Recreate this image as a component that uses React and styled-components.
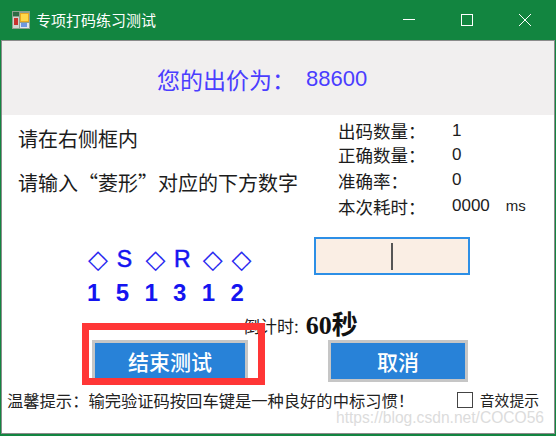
import styled, { createGlobalStyle } from 'styled-components'

const cjk = '"Noto Sans CJK SC", "Liberation Sans", sans-serif'

const GlobalStyle = createGlobalStyle`
    html, body {
        margin: 0;
        padding: 0;
        background: #fff;
        font-family: ${cjk};
    }
`

const Window = styled.div`
    position: relative;
    width: 556px;
    height: 436px;
    box-sizing: border-box;
    display: flex;
    flex-direction: column;
    overflow: hidden;
    background: #128540;
`

const TitleBar = styled.header`
    height: 40px;
    flex: none;
    display: flex;
    align-items: center;
    padding-left: 12px;
    color: #fff;
    font-size: 15px;
`

const TitleText = styled.span`
    margin-left: 6px;
    line-height: 18px;
`

const Controls = styled.div`
    margin-left: auto;
    margin-right: 2px;
    display: flex;
`

const ControlButton = styled.div`
    width: 58px;
    height: 40px;
    display: flex;
    align-items: center;
    justify-content: center;
`

const Client = styled.main`
    flex: 1;
    margin: 0 1px 2px 1px;
    border: 1px solid #8b8b8b;
    background: #fff;
    display: flex;
    flex-direction: column;
`

const Banner = styled.section`
    height: 74px;
    flex: none;
    background: #f1efef;
    color: #4a3dff;
    font-size: 23px;
    padding-left: 155px;
    display: flex;
    align-items: center;
    box-sizing: border-box;
    padding-top: 1px;
`

const Price = styled.span`
    margin-left: 11px;
    font-size: 22px;
    font-family: "Liberation Sans", sans-serif;
`

const InfoRow = styled.section`
    height: 110px;
    flex: none;
    display: flex;
    padding-left: 16px;
`

const Prompt = styled.div`
    width: 320px;
    flex: none;
    padding-top: 9px;
    font-size: 20px;
    color: #1c1c1c;
`

const PromptLine = styled.div`
    height: 44px;
    line-height: 30px;
    white-space: nowrap;
`

const Stats = styled.div`
    padding-top: 3px;
    font-size: 17.5px;
    color: #1c1c1c;
`

const StatRow = styled.div`
    display: grid;
    grid-template-columns: 114px auto;
    align-items: center;
    height: ${p => p.$h}px;
    white-space: nowrap;
`

const StatValue = styled.span`
    font-family: "Liberation Sans", sans-serif;
    font-size: 17px;
`

const Unit = styled.span`
    margin-left: 16px;
    font-size: 15px;
`

const PlayRow = styled.section`
    height: 87px;
    flex: none;
    display: flex;
    padding-left: 88px;
`

const Codes = styled.div`
    width: 224px;
    flex: none;
    padding-top: 18px;
    display: grid;
    grid-template-columns: repeat(6, 28.7px);
    grid-auto-rows: 33px;
    color: #1414f0;
    align-items: center;
`

const Code = styled.span`
    font-family: "Liberation Sans", sans-serif;
    font-size: ${p => (p.$digit ? 24 : 23)}px;
    font-weight: ${p => (p.$digit ? 700 : 400)};
    line-height: 33px;
    margin-left: ${p => (p.$digit ? -3 : -2)}px;
    -webkit-text-stroke: ${p => (p.$digit ? 0 : 0.5)}px #1414f0;
`

const Diamond = styled.span`
    font-family: "DejaVu Sans", sans-serif;
    font-size: 26px;
    line-height: 33px;
    margin-left: -2px;
    color: #2a2af0;
`

const AnswerBox = styled.div`
    width: 156px;
    height: 38px;
    margin-top: 12px;
    box-sizing: border-box;
    border: 2px solid #2d8fe6;
    background: #faeee4;
    display: flex;
    align-items: center;
    justify-content: center;
`

const Caret = styled.div`
    width: 2px;
    height: 27px;
    background: #555;
`

const Countdown = styled.div`
    height: 28px;
    flex: none;
    padding-left: 241px;
    display: flex;
    align-items: center;
    font-size: 17px;
    line-height: 24px;
    color: #1c1c1c;
`

const Time = styled.strong`
    margin-left: 7px;
    font-size: 26px;
    line-height: 28px;
    font-family: "Liberation Serif", ${cjk};
    color: #111;
`

const Buttons = styled.div`
    height: 42px;
    flex: none;
    display: flex;
    padding-left: 90px;
    gap: 80px;
`

const ActionButton = styled.button`
    width: ${p => p.$w}px;
    height: 42px;
    box-sizing: border-box;
    border: 3px solid #c6c6c6;
    background: #2882d8;
    color: #fff;
    font-family: ${cjk};
    font-size: 21px;
    font-weight: 500;
    padding: 0;
`

const Footer = styled.footer`
    height: 18px;
    margin-top: 9px;
    flex: none;
    display: flex;
    align-items: center;
    padding-left: 5px;
    color: #222;
    font-size: 16.3px;
    line-height: 18px;
    white-space: nowrap;
`

const Check = styled.label`
    margin-left: auto;
    margin-right: 15px;
    display: flex;
    align-items: center;
    gap: 7px;
    font-size: 14.8px;
`

const CheckBox = styled.span`
    width: 16px;
    height: 16px;
    box-sizing: border-box;
    border: 1.5px solid #444;
    background: #fff;
`

const Annotation = styled.div`
    position: absolute;
    left: 82px;
    top: 323px;
    width: 183px;
    height: 62px;
    box-sizing: border-box;
    border: 7px solid #ff3636;
    pointer-events: none;
`

const Watermark = styled.div`
    position: absolute;
    left: 336px;
    top: 410px;
    font-family: "Liberation Sans", sans-serif;
    font-size: 15.6px;
    line-height: 15px;
    color: #dcdcdc;
    white-space: nowrap;
`

function AppIcon () {
    return (
        <svg width="18" height="18" viewBox="0 0 18 18">
            <rect width="18" height="18" fill="#8fa08f" />
            <rect x="1" y="1" width="6" height="4" fill="#2f6b45" />
            <rect x="1" y="6" width="6" height="11" fill="#cfd6cf" />
            <rect x="2" y="7" width="4" height="7" fill="#c8332e" />
            <rect x="8" y="2" width="9" height="9" fill="#e8a820" />
            <rect x="9" y="3" width="7" height="7" fill="#ffd84a" />
            <rect x="8" y="12" width="9" height="5" fill="#dfe6ee" />
            <rect x="9" y="12" width="6" height="4" fill="#6f97e0" />
        </svg>
    )
}

function App () {
    return (
        <>
            <GlobalStyle />
            <Window>
                <TitleBar>
                    <AppIcon />
                    <TitleText>专项打码练习测试</TitleText>
                    <Controls>
                        <ControlButton>
                            <svg width="12" height="12" viewBox="0 0 12 12">
                                <path d="M0 5.5H12" stroke="#fff" />
                            </svg>
                        </ControlButton>
                        <ControlButton>
                            <svg width="12" height="12" viewBox="0 0 12 12">
                                <rect x="0.5" y="0.5" width="11" height="11" fill="none" stroke="#fff" />
                            </svg>
                        </ControlButton>
                        <ControlButton>
                            <svg width="12" height="12" viewBox="0 0 12 12">
                                <path d="M0 0L12 12M12 0L0 12" stroke="#fff" />
                            </svg>
                        </ControlButton>
                    </Controls>
                </TitleBar>
                <Client>
                    <Banner>
                        您的出价为：<Price>88600</Price>
                    </Banner>
                    <InfoRow>
                        <Prompt>
                            <PromptLine>请在右侧框内</PromptLine>
                            <PromptLine>请输入“菱形”对应的下方数字</PromptLine>
                        </Prompt>
                        <Stats>
                            <StatRow $h={24}>出码数量：<StatValue>1</StatValue></StatRow>
                            <StatRow $h={25}>正确数量：<StatValue>0</StatValue></StatRow>
                            <StatRow $h={26}>准确率：<StatValue>0</StatValue></StatRow>
                            <StatRow $h={26}>本次耗时：<StatValue>0000<Unit>ms</Unit></StatValue></StatRow>
                        </Stats>
                    </InfoRow>
                    <PlayRow>
                        <Codes>
                            <Diamond>◇</Diamond>
                            <Code>S</Code>
                            <Diamond>◇</Diamond>
                            <Code>R</Code>
                            <Diamond>◇</Diamond>
                            <Diamond>◇</Diamond>
                            {[1, 5, 1, 3, 1, 2].map((n, i) => (
                                <Code $digit key={i}>{n}</Code>
                            ))}
                        </Codes>
                        <AnswerBox>
                            <Caret />
                        </AnswerBox>
                    </PlayRow>
                    <Countdown>
                        倒计时:<Time>60秒</Time>
                    </Countdown>
                    <Buttons>
                        <ActionButton $w={156}>结束测试</ActionButton>
                        <ActionButton $w={140}>取消</ActionButton>
                    </Buttons>
                    <Footer>
                        温馨提示：输完验证码按回车键是一种良好的中标习惯！
                        <Check>
                            <CheckBox />
                            音效提示
                        </Check>
                    </Footer>
                </Client>
                <Annotation />
                <Watermark>https://blog.csdn.net/COCO56</Watermark>
            </Window>
        </>
    )
}

export default App
